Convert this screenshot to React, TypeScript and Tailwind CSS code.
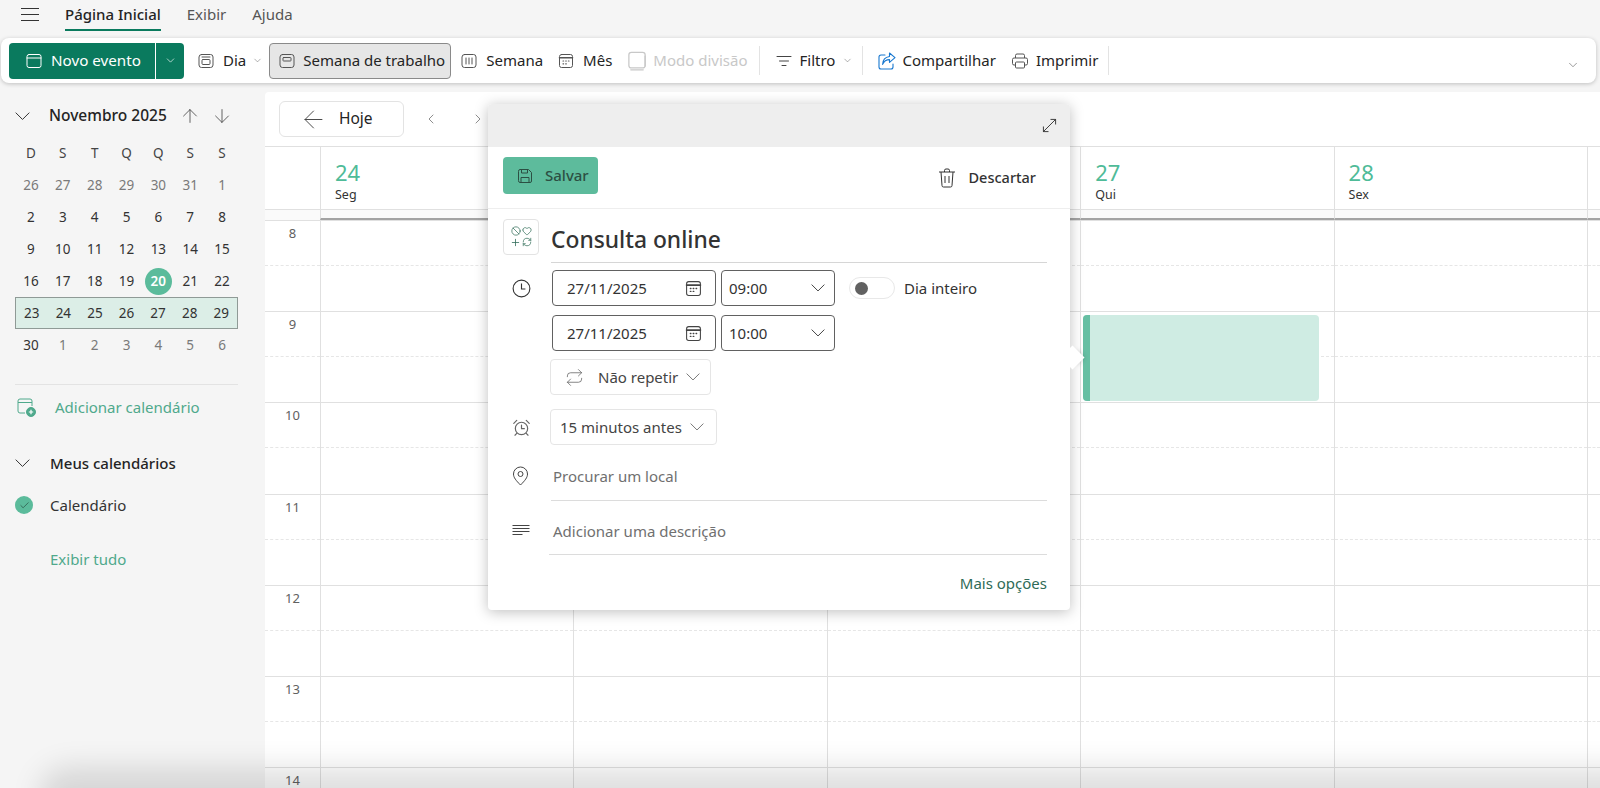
import { ReactNode } from "react";
import { ArrowDown, ArrowLeft, ArrowUp, Ban, Check, ChevronDown, ChevronLeft, ChevronRight, Heart, Plus, RefreshCw, Repeat } from "lucide-react";

const font = { fontFamily: '"Noto Sans", "Open Sans", sans-serif' };

const weeks = [
  ["26", "27", "28", "29", "30", "31", "1"],
  ["2", "3", "4", "5", "6", "7", "8"],
  ["9", "10", "11", "12", "13", "14", "15"],
  ["16", "17", "18", "19", "20", "21", "22"],
  ["23", "24", "25", "26", "27", "28", "29"],
  ["30", "1", "2", "3", "4", "5", "6"],
];

const days = [
  ["24", "Seg"],
  ["25", "Ter"],
  ["26", "Qua"],
  ["27", "Qui"],
  ["28", "Sex"],
];

function Svg({ size = 16, className, children }: { size?: number; className?: string; children: ReactNode }) {
  return (
    <svg width={size} height={size} viewBox="0 0 16 16" fill="none" stroke="currentColor" strokeWidth="1" strokeLinecap="round" strokeLinejoin="round" className={className}>
      {children}
    </svg>
  );
}

// wide thin chevron, lucide's is too narrow for its box
function Chev({ w = 14, className }: { w?: number; className?: string }) {
  return (
    <svg width={w} height={w * 0.56} viewBox="0 0 16 9" fill="none" stroke="currentColor" strokeWidth={16 / w} strokeLinecap="round" strokeLinejoin="round" className={className}>
      <path d="M1 1l7 7 7-7" />
    </svg>
  );
}

function CalGrid({ size = 17 }: { size?: number }) {
  return (
    <Svg size={size}>
      <rect x="1.5" y="1.5" width="13" height="13" rx="2" />
      <path d="M1.5 4.8h13" strokeWidth="1.6" />
      <path d="M5 8h.6M7.7 8h.6M10.4 8h.6M5 10.8h.6M7.7 10.8h.6" strokeWidth="1.2" />
    </Svg>
  );
}

function RibbonItem({ icon, label, className = "", gap = "gap-[9px]" }: { icon: ReactNode; label: string; className?: string; gap?: string }) {
  return (
    <div className={`flex items-center text-[15px] text-[#242424] ${gap} ${className}`}>
      {icon}
      <span>{label}</span>
    </div>
  );
}

function Ribbon() {
  return (
    <div className="ml-[1px] flex h-[45px] w-[1595px] items-center rounded-lg bg-white pl-2 pr-[16px] shadow-[0_1px_4px_rgba(0,0,0,0.22)]">
      <div className="flex h-[36px] w-[175px] rounded bg-[#0a7a5e] text-white">
        <div className="flex w-[146px] items-center gap-[9px] pl-[17px] text-[15.2px]">
          <Svg>
            <rect x="1" y="1.5" width="14" height="13" rx="2" />
            <path d="M1 5h14" />
          </Svg>
          <span>Novo evento</span>
        </div>
        <div className="flex flex-1 items-center justify-center border-l border-white">
          <ChevronDown size={13} strokeWidth={1.2} />
        </div>
      </div>
      <RibbonItem
        className="ml-[14px]"
        label="Dia"
        icon={
          <Svg className="text-[#555]">
            <rect x="1" y="1.5" width="14" height="13" rx="2.5" />
            <rect x="4" y="6.5" width="8" height="5" rx="1" />
            <path d="M4 4h8" />
          </Svg>
        }
      />
      <ChevronDown size={11} strokeWidth={1} className="ml-[6px] text-[#555]" />
      <div className="ml-[6px] flex h-[36px] w-[182px] items-center gap-[8px] rounded border border-[#8a8a8a] bg-[#e6e6e6] pl-[9px] text-[15px] text-[#242424]">
        <Svg className="text-[#555]">
          <rect x="1" y="1.5" width="14" height="13" rx="2.5" />
          <rect x="4" y="4.5" width="8" height="3.5" rx="0.6" />
        </Svg>
        <span>Semana de trabalho</span>
      </div>
      <RibbonItem
        className="ml-[10px]"
        label="Semana"
        icon={
          <Svg className="text-[#555]">
            <rect x="1" y="1.5" width="14" height="13" rx="2.5" />
            <path d="M5 5v6M8 5v6M11 5v6" />
          </Svg>
        }
      />
      <RibbonItem className="ml-[15px]" label="Mês" icon={<span className="text-[#555]"><CalGrid size={16} /></span>} />
      <RibbonItem
        className="ml-[15px] !text-[#c8c8c8]"
        gap="gap-[6px]"
        label="Modo divisão"
        icon={
          <Svg size={20} className="text-[#c8c8c8]">
            <rect x="1.5" y="1" width="13" height="12.5" rx="2" />
            <path d="M3 15h10M14.5 4v8" />
          </Svg>
        }
      />
      <div className="ml-[11px] h-[29px] w-px bg-[#e3e3e3]" />
      <RibbonItem
        className="ml-[16px]"
        gap="gap-[8px]"
        label="Filtro"
        icon={
          <Svg className="text-[#444]">
            <path d="M1 3.5h14M3.5 8h9M6 12.5h4" />
          </Svg>
        }
      />
      <ChevronDown size={11} strokeWidth={1} className="ml-[7px] text-[#555]" />
      <div className="ml-[9px] h-[29px] w-px bg-[#e3e3e3]" />
      <RibbonItem
        className="ml-[15px]"
        gap="gap-[6px]"
        label="Compartilhar"
        icon={
          <svg width="18" height="18" viewBox="0 0 18 18" fill="none" stroke="#1878d0" strokeWidth="1.1" strokeLinejoin="round" strokeLinecap="round">
            <path d="M7 3H3a2 2 0 0 0-2 2v10a2 2 0 0 0 2 2h10a2 2 0 0 0 2-2v-3" />
            <path d="M11.5 1l5.5 4.6-5.5 4.8V7.6C8.3 7.6 6 9.2 4.6 12.4c.2-4.6 2.7-7.3 6.9-7.9z" />
          </svg>
        }
      />
      <RibbonItem
        className="ml-[15px]"
        gap="gap-[7px]"
        label="Imprimir"
        icon={
          <svg width="18" height="18" viewBox="0 0 18 18" fill="none" stroke="#555" strokeWidth="1" strokeLinejoin="round">
            <path d="M4.5 6V3.5a1.5 1.5 0 0 1 1.5-1.5h6a1.5 1.5 0 0 1 1.5 1.5V6" />
            <path d="M4.5 13H3a1.5 1.5 0 0 1-1.5-1.5v-4A1.5 1.5 0 0 1 3 6h12a1.5 1.5 0 0 1 1.5 1.5v4A1.5 1.5 0 0 1 15 13h-1.5" />
            <rect x="4.5" y="10" width="9" height="6" rx="1" />
          </svg>
        }
      />
      <div className="ml-[10px] h-[29px] w-px bg-[#e3e3e3]" />
      <ChevronDown size={14} strokeWidth={1} className="ml-auto mt-[8px] text-[#555]" />
    </div>
  );
}

function Sidebar() {
  return (
    <aside className="w-[265px] shrink-0 pl-[15px] pt-[12px] text-[#242424]">
      <div className="flex h-[24px] w-[223px] items-center">
        <Chev w={15} className="text-[#333]" />
        <span className="ml-[19px] text-[15.5px] font-medium">Novembro 2025</span>
        <ArrowUp size={22} strokeWidth={0.9} className="ml-auto mr-[10px] text-[#444]" />
        <ArrowDown size={22} strokeWidth={0.9} className="mr-[5px] text-[#444]" />
      </div>
      <div className="mt-[9px] grid w-[223px] grid-cols-7 text-center text-[13.5px] leading-[32px] text-[#444]">
        {["D", "S", "T", "Q", "Q", "S", "S"].map((d, i) => (
          <div key={i}>{d}</div>
        ))}
      </div>
      <div className="w-[223px] text-[13.5px]">
        {weeks.map((week, w) => (
          <div key={w} className={`grid h-[32px] grid-cols-7 items-center text-center ${w === 4 ? "border border-[#8f9a96] bg-[#dceee7]" : ""}`}>
            {week.map((d, i) => {
              const muted = w === 0 || (w === 5 && i > 0);
              if (d === "20")
                return (
                  <div key={i} className="mx-auto flex size-[27px] items-center justify-center rounded-full bg-[#5bbb9b] font-semibold text-white">
                    {d}
                  </div>
                );
              return (
                <div key={i} className={muted ? "text-[#7a7a7a]" : "text-[#333]"}>
                  {d}
                </div>
              );
            })}
          </div>
        ))}
      </div>
      <div className="mt-[23px] h-px w-[223px] bg-[#e3e3e3]" />
      <div className="mt-[11px] flex h-[22px] items-center text-[15px] text-[#4fa98c]">
        <svg width="19" height="19" viewBox="0 0 19 19" fill="none" stroke="#4fa98c" strokeWidth="1" className="ml-[2px]">
          <path d="M8 15H3a2 2 0 0 1-2-2V3a2 2 0 0 1 2-2h10a2 2 0 0 1 2 2v5M1 4.5h14" />
          <circle cx="14" cy="14" r="4.5" fill="#4fa98c" />
          <path d="M14 11.8v4.4M11.8 14h4.4" stroke="#fff" strokeWidth="1.2" />
        </svg>
        <span className="ml-[19px]">Adicionar calendário</span>
      </div>
      <div className="mt-[34px] flex h-[22px] items-center text-[15px] font-medium">
        <Chev w={15} className="text-[#333]" />
        <span className="ml-[20px]">Meus calendários</span>
      </div>
      <div className="mt-[20px] flex h-[22px] items-center text-[15px] text-[#333]">
        <div className="flex size-[18px] items-center justify-center rounded-full bg-[#5bbb9b]">
          <Check size={11} strokeWidth={1.3} className="text-[#1f3b32]" />
        </div>
        <span className="ml-[17px]">Calendário</span>
      </div>
      <div className="ml-[35px] mt-[32px] text-[15px] leading-[22px] text-[#4fa98c]">Exibir tudo</div>
    </aside>
  );
}

function HourRow({ hour }: { hour: number }) {
  return (
    <div className="grid h-[91.2px] shrink-0 grid-cols-[55px_repeat(5,253.4px)_1fr] border-t border-[#e0e0e0]">
      {[0, 1, 2, 3, 4, 5, 6].map((c) => (
        <div key={c} className={`flex flex-col ${c > 0 ? "border-l border-[#e0e0e0]" : ""}`}>
          <div className="h-1/2 border-b border-dashed border-[#e6e6e6] pt-[5px] text-center text-[13px] leading-[15px] text-[#616161]">
            {c === 0 ? hour : ""}
          </div>
        </div>
      ))}
    </div>
  );
}

function Calendar() {
  return (
    <main className="relative flex min-w-0 flex-1 flex-col overflow-hidden rounded-tl bg-white text-[#242424]">
      <div className="flex h-[54px] shrink-0 items-center pl-[14px]">
        <div className="flex h-[36px] w-[125px] items-center rounded-md border border-[#e3e3e3] pl-[19px] text-[15.5px]">
          <ArrowLeft size={29} strokeWidth={0.8} className="text-[#444]" />
          <span className="ml-[11px]">Hoje</span>
        </div>
        <ChevronLeft size={16} strokeWidth={1} className="ml-[19px] text-[#555]" />
        <ChevronRight size={16} strokeWidth={1} className="ml-[31px] text-[#555]" />
      </div>
      <div className="grid h-[63px] shrink-0 grid-cols-[55px_repeat(5,253.4px)_1fr] border-t border-[#e0e0e0]">
        <div />
        {days.map(([n, d]) => (
          <div key={n} className="border-l border-[#e0e0e0] pl-[14px] pt-[10px]">
            <div className="text-[22px] leading-[30px] text-[#4fbb98]">{n}</div>
            <div className="text-[12.5px] leading-[16px] text-[#333]">{d}</div>
          </div>
        ))}
        <div className="border-l border-[#e0e0e0]" />
      </div>
      <div className="grid h-[11px] shrink-0 grid-cols-[55px_repeat(5,253.4px)_1fr] border-t border-[#e0e0e0] bg-[#fafafa]">
        <div />
        {[0, 1, 2, 3, 4, 5].map((c) => (
          <div key={c} className="border-b-2 border-l border-[#e0e0e0] border-b-[#a3a3a3]" />
        ))}
      </div>
      {[8, 9, 10, 11, 12, 13, 14].map((h) => (
        <HourRow key={h} hour={h} />
      ))}
      <div className="absolute left-[818px] top-[223px] flex h-[86px] w-[236px] overflow-hidden rounded bg-[#cfece3]">
        <div className="w-[7px] bg-[#67bfa3]" />
      </div>
    </main>
  );
}

function Popover() {
  return (
    <div className="absolute left-[488px] top-[104px] h-[506px] w-[582px] rounded bg-white text-[#242424] shadow-[0_2px_14px_rgba(0,0,0,0.25)]">
      <div className="absolute left-[576px] top-[245px] size-[17px] rotate-45 bg-white shadow-[3px_-3px_5px_-3px_rgba(0,0,0,0.2)]" />
      <div className="relative">
        <div className="flex h-[43px] items-center justify-end rounded-t bg-[#eeeeee] pr-[13px]">
          <Svg size={15} className="text-[#333]">
            <path d="M9.5 1.5h5v5M14.5 1.5l-13 13M1.5 9.5v5h5" />
          </Svg>
        </div>
        <div className="flex h-[62px] items-center justify-between border-b border-[#eeeeee] pl-[15px] pr-[34px]">
          <div className="-mt-[4px] flex h-[37px] w-[95px] items-center gap-[12px] rounded bg-[#5dbb9c] pl-[14px] text-[15px] font-medium text-[#2c4f43]">
            <Svg>
              <path d="M1.5 3a1.5 1.5 0 0 1 1.5-1.5h8.5l3 3V13a1.5 1.5 0 0 1-1.5 1.5H3A1.5 1.5 0 0 1 1.5 13z" />
              <path d="M4.5 1.5v3.5h6V1.5M4 14.5V9.5h8v5" />
            </Svg>
            <span>Salvar</span>
          </div>
          <div className="flex items-center gap-[13px] text-[14.5px] text-[#333]">
            <svg width="18" height="20" viewBox="0 0 18 20" fill="none" stroke="#333" strokeWidth="1">
              <path d="M1 4h16M6.5 4V2.5A1.5 1.5 0 0 1 8 1h2a1.5 1.5 0 0 1 1.5 1.5V4M3 4l1 13.5A1.5 1.5 0 0 0 5.5 19h7a1.5 1.5 0 0 0 1.5-1.5L15 4M7 8v7M11 8v7" />
            </svg>
            <span className="font-medium">Descartar</span>
          </div>
        </div>
        <div className="ml-[15px] mt-[10px] flex h-[44px] items-start">
          <div className="grid size-[36px] grid-cols-2 place-items-center rounded border border-[#e3e3e3] p-[6px] text-[#2f6b57]">
            <Ban size={10} strokeWidth={1.7} />
            <Heart size={10} strokeWidth={1.7} />
            <Plus size={11} strokeWidth={1.7} />
            <RefreshCw size={10} strokeWidth={1.7} />
          </div>
          <div className="ml-[12px] h-[44px] w-[496px] border-b border-[#d6d6d6] text-[22.8px] font-medium leading-[42px] text-[#333]">Consulta online</div>
        </div>
        <div className="ml-[24px] mt-[7px] flex">
          <div className="flex w-[40px] flex-col pt-[9px]">
            <svg width="19" height="19" viewBox="0 0 17 17" fill="none" stroke="#333" strokeWidth="1">
              <circle cx="8.5" cy="8.5" r="7.5" />
              <path d="M8.5 4v5h3.5" />
            </svg>
          </div>
          <div className="flex flex-col gap-[9px]">
            {["09:00", "10:00"].map((t, i) => (
              <div key={t} className="flex gap-[5px] text-[15px] text-[#333]">
                <div className="flex h-[36px] w-[164px] items-center justify-between rounded border border-[#616161] pl-[14px] pr-[13px]">
                  <span>27/11/2025</span>
                  <span className="text-[#444]"><CalGrid /></span>
                </div>
                <div className="flex h-[36px] w-[114px] items-center justify-between rounded border border-[#616161] pl-[7px] pr-[9px]">
                  <span>{t}</span>
                  <Chev w={14} className="text-[#444]" />
                </div>
                {i === 0 && (
                  <div className="ml-[9px] flex items-center gap-[9px]">
                    <div className="flex h-[22px] w-[46px] items-center rounded-full border border-[#e8e8e8] pl-[5px]">
                      <div className="size-[13px] rounded-full bg-[#616161]" />
                    </div>
                    <span>Dia inteiro</span>
                  </div>
                )}
              </div>
            ))}
          </div>
        </div>
        <div className="ml-[62px] mt-[8px] flex h-[36px] w-[161px] items-center rounded border border-[#e5e5e5] pl-[14px] text-[15px] text-[#444]">
          <Repeat size={19} strokeWidth={1} className="text-[#666]" />
          <span className="ml-[14px]">Não repetir</span>
          <Chev w={14} className="ml-[8px] text-[#777]" />
        </div>
        <div className="ml-[24px] mt-[14px] flex items-center">
          <Svg size={19} className="text-[#666]">
            <circle cx="8" cy="8.8" r="5.2" />
            <path d="M8 6v3h2.4M1.5 4.5l2.5-2.5M14.5 4.5L12 2M4 13l-1.5 1.5M12 13l1.5 1.5" />
          </Svg>
          <div className="ml-[19px] flex h-[36px] w-[167px] items-center rounded border border-[#e5e5e5] pl-[9px] text-[15px] text-[#444]">
            <span>15 minutos antes</span>
            <Chev w={14} className="ml-[8px] text-[#777]" />
          </div>
        </div>
        <div className="ml-[24px] mt-[15px] flex h-[41px] items-start">
          <svg width="17" height="20" viewBox="0 0 17 20" fill="none" stroke="#444" strokeWidth="1" className="mt-[6px]">
            <path d="M8.5 19C4 14.5 1.5 11.5 1.5 8a7 7 0 0 1 14 0c0 3.5-2.5 6.5-7 11z" />
            <circle cx="8.5" cy="8" r="2.5" />
          </svg>
          <div className="ml-[22px] h-[41px] flex-1 border-b border-[#dcdcdc] pl-[2px]">
            <span className="text-[15px] leading-[32px] text-[#707070]">Procurar um local</span>
          </div>
          <div className="w-[23px]" />
        </div>
        <div className="ml-[24px] mt-[20px] flex h-[34px] items-start">
          <svg width="18" height="14" viewBox="0 0 18 14" fill="none" stroke="#444" strokeWidth="1" className="mt-[3px]">
            <path d="M0.5 1.5h17M0.5 4.5h17M0.5 7.5h17M0.5 10.5h10" />
          </svg>
          <div className="ml-[19px] h-[34px] flex-1 border-b border-[#dcdcdc] pl-[4px]">
            <span className="block text-[15px] leading-[20px] text-[#707070]">Adicionar uma descrição</span>
          </div>
          <div className="w-[23px]" />
        </div>
        <div className="mr-[23px] mt-[17px] text-right text-[15px] leading-[22px] text-[#2f6b57]">Mais opções</div>
      </div>
    </div>
  );
}

export default function App() {
  return (
    <div style={font} className="relative flex h-[788px] w-[1600px] flex-col overflow-hidden bg-[#f5f5f5]">
      <header className="flex h-[38px] shrink-0 items-start pl-[21px] text-[15px]">
        <div className="mt-[8px] flex h-[13px] w-[18px] flex-col justify-between">
          <div className="h-px bg-[#333]" />
          <div className="h-px bg-[#333]" />
          <div className="h-px bg-[#333]" />
        </div>
        <div className="ml-[26px] h-[31px] border-b-2 border-[#0a7a5e] pt-[3px] font-medium leading-[22px] text-[#242424]">Página Inicial</div>
        <div className="ml-[26px] pt-[3px] leading-[22px] text-[#555]">Exibir</div>
        <div className="ml-[26px] pt-[3px] leading-[22px] text-[#555]">Ajuda</div>
      </header>
      <Ribbon />
      <div className="mt-[9px] flex min-h-0 flex-1">
        <Sidebar />
        <Calendar />
      </div>
      <Popover />
      <div className="pointer-events-none absolute -right-[60px] left-[60px] top-[792px] h-[20px] rounded-full shadow-[0_-4px_30px_20px_rgba(0,0,0,0.13)]" />
    </div>
  );
}
